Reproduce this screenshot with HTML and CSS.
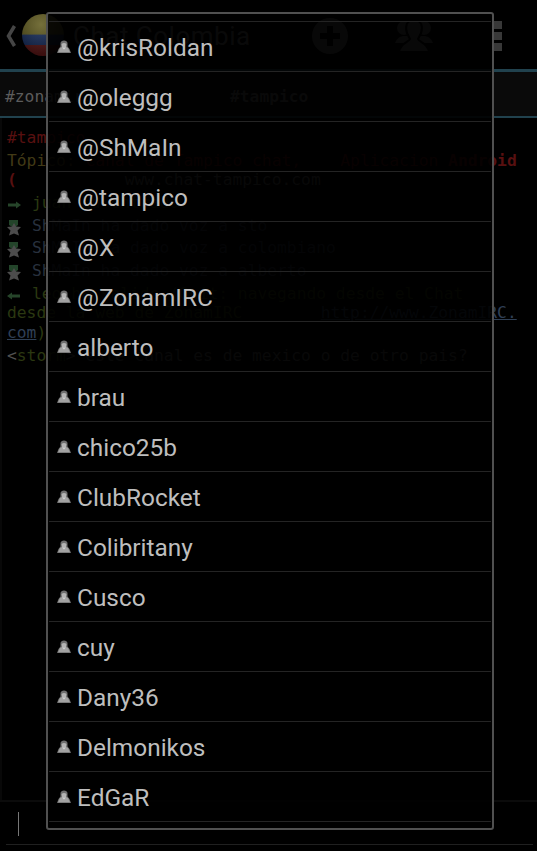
FILE: index.html
```html
<!DOCTYPE html>
<html lang="es">
<head>
  <meta charset="UTF-8" />
  <meta name="viewport" content="width=device-width, initial-scale=1.0"/>
  <title>Chat Colombia</title>
  <link rel="stylesheet" href="styles.css">
</head>
<body>

  <!-- Shared icons -->
  <svg class="defs" width="0" height="0">
    <symbol id="user" viewBox="0 0 14 14">
      <path d="M3.500 3Q4 .5 7 .5T10.500 3L10.500 6.500 12.500 9 14 13H0L1.500 9 3.500 6.500Z" fill="#6e6e6e"/>
      <path d="M4.500 4Q7 2 9.500 4L9 7H5Z" fill="#b4b4b4"/>
      <path d="M3 8 5 7H9L11 8 13 12.300H1Z" fill="#a2a2a2"/>
      <path d="M5 7.500 7 9.500 9 7.500Z" fill="#d4d4d4"/>
    </symbol>
    <symbol id="voice" viewBox="0 0 14 17">
      <path d="M2 0H11V5L7 8 2 5Z" fill="#23442a"/>
      <path d="M7 3 9 6.500 14 7 10.500 10.500 12 15.500 7 13.500 2 15.500 3.500 10.500 0 7 5 6.500Z" fill="#4c4c4c"/>
    </symbol>
  </svg>

  <!-- Chat screen -->
  <div class="chat">
    <header class="topbar">
      <svg class="back" width="12" height="24" viewBox="0 0 12 24"><path d="M9.500 2 3.500 12 9.500 22" fill="none" stroke="#454545" stroke-width="3.500"/></svg>
      <div class="flag"></div>
      <h1>Chat Colombia</h1>
      <svg class="add" width="38" height="38" viewBox="0 0 38 38"><circle cx="19" cy="19" r="18" fill="#555"/><path d="M19 9V29M9 19H29" stroke="#000" stroke-width="6"/></svg>
      <svg class="people" width="38" height="34" viewBox="0 0 38 34" fill="#505050"><circle cx="9" cy="9" r="7"/><circle cx="29" cy="9" r="7"/><path d="M0 24Q2 18 8 17H30Q36 18 38 24Z"/><path d="M19 1C27 1 28 8 26 14L23 20C24 23 33 24 34 33H4C5 24 14 23 15 20L12 14C10 8 11 1 19 1Z" stroke="#000" stroke-width="2"/></svg>
      <div class="more"><i></i><i></i><i></i></div>
    </header>

    <nav class="tabs">
      <span class="tab">#zonamirc</span>
      <span class="tab active">#tampico</span>
    </nav>

    <main class="log">
      <p class="red">#tampico</p>
      <p class="gold">Tópico: <span class="red">Canal de Tampico chat,    Aplicacion <b>Android</b><br><b>(</b></span>           <span class="plain">www.chat-tampico.com</span></p>
      <p class="olive"><svg class="mark" width="14" height="14"><path d="M1 6.500H9V4.500L14 8 9 11.500V9.500H1Z" fill="#26452a"/></svg>juan ha entrado</p>
      <p class="blue"><svg class="mark" width="14" height="17"><use href="#voice"/></svg>ShMaIn ha dado voz a sto</p>
      <p class="blue"><svg class="mark" width="14" height="17"><use href="#voice"/></svg>ShMaIn ha dado voz a colombiano</p>
      <p class="blue"><svg class="mark" width="14" height="17"><use href="#voice"/></svg>ShMaIn ha dado voz a alberto</p>
      <p class="olive"><svg class="mark" width="14" height="14"><path d="M13 6.500H5V4.500L0 8 5 11.500V9.500H13Z" fill="#26452a"/></svg>leo ha salido (Quit: navegando desde el Chat<br>desde la web de ZonamIRC        <a>http://www.ZonamIRC.<br>com</a>)</p>
      <p class="plain">&lt;<span class="olive">storm</span>&gt; este canal es de mexico o de otro pais?</p>
    </main>

    <footer class="entry">
      <div class="field"><span class="caret"></span></div>
    </footer>
  </div>

  <!-- User list dialog -->
  <div class="dialog">
    <ul class="users">
      <li><svg><use href="#user"/></svg>@krisRoldan</li>
      <li><svg><use href="#user"/></svg>@oleggg</li>
      <li><svg><use href="#user"/></svg>@ShMaIn</li>
      <li><svg><use href="#user"/></svg>@tampico</li>
      <li><svg><use href="#user"/></svg>@X</li>
      <li><svg><use href="#user"/></svg>@ZonamIRC</li>
      <li><svg><use href="#user"/></svg>alberto</li>
      <li><svg><use href="#user"/></svg>brau</li>
      <li><svg><use href="#user"/></svg>chico25b</li>
      <li><svg><use href="#user"/></svg>ClubRocket</li>
      <li><svg><use href="#user"/></svg>Colibritany</li>
      <li><svg><use href="#user"/></svg>Cusco</li>
      <li><svg><use href="#user"/></svg>cuy</li>
      <li><svg><use href="#user"/></svg>Dany36</li>
      <li><svg><use href="#user"/></svg>Delmonikos</li>
      <li><svg><use href="#user"/></svg>EdGaR</li>
    </ul>
  </div>

</body>
</html>
```
FILE: styles.css
```css
* {
  box-sizing: border-box;
  margin: 0;
  padding: 0;
}

body {
  height: 851px;
  overflow: hidden;
  background: #000;
  font-family: Roboto, sans-serif;
}

.defs {
  position: absolute;
}

.chat {
  height: 851px;
  display: flex;
  flex-direction: column;
}

/* Top bar */
.topbar {
  height: 72px;
  padding: 2px 0 0 5px;
  display: flex;
  align-items: center;
  border-bottom: 3px solid #21424e;
}

.flag {
  width: 42px;
  height: 42px;
  margin: 0 0 2px 5px;
  border-radius: 50%;
  background:
    radial-gradient(circle at 45% 25%, rgba(255, 255, 255, 0.12), rgba(0, 0, 0, 0.35) 75%),
    linear-gradient(#625c20 48%, #172d5c 50%, #172d5c 73%, #5b1717 75%);
}

.topbar h1 {
  width: 238px;
  margin-left: 9px;
  font-size: 26px;
  font-weight: 400;
  letter-spacing: 0.5px;
  color: #606060;
  white-space: nowrap;
}

.people {
  margin-left: 46px;
}

.more {
  margin-left: 59px;
  display: grid;
  gap: 3px;
}

.more i {
  width: 10px;
  height: 8px;
  background: #383838;
}

/* Channel tabs */
.tabs {
  height: 46px;
  display: flex;
  background: #0a0a0a;
  border-bottom: 2px solid #21424e;
  font: 16.3px/50px "DejaVu Sans Mono", monospace;
  color: #5c5c5c;
}

.tab {
  width: 201px;
  padding-left: 5px;
}

.tab.active {
  width: 138px;
  padding-left: 29px;
  font-weight: bold;
}

/* Messages */
.log {
  flex: 1;
  padding: 10px 0 0 5px;
  border-left: 2px solid #080808;
  font: 16.3px/19.6px "DejaVu Sans Mono", monospace;
}

.log p {
  padding-bottom: 3.1px;
  white-space: pre;
}

.mark {
  width: 25px;
  padding-right: 11px;
  vertical-align: -4px;
  height: 17px;
  margin: -2px 0;
}

.red {
  color: #581010;
}

.gold {
  color: #423a16;
}

.olive {
  color: #2b3811;
}

.blue {
  color: #28313e;
}

.plain {
  color: #505050;
}

.log a {
  color: #2f3f55;
  text-decoration: underline;
}

/* Message entry */
.entry {
  height: 51px;
  padding: 10px 4px 7px 6px;
  border-top: 2px solid #0b0b0b;
}

.field {
  height: 33px;
  padding-left: 12px;
  border-bottom: 1px solid #202020;
}

.caret {
  display: block;
  width: 1px;
  height: 24px;
  background: #777;
}

/* Dialog */
.dialog {
  position: absolute;
  left: 46px;
  top: 12px;
  width: 448px;
  height: 818px;
  padding: 7px 1px 0;
  border: 2px solid #505050;
  border-radius: 3px;
  background: rgba(0, 0, 0, 0.9);
}

.users {
  list-style: none;
  border-top: 1px solid #242424;
}

.users li {
  height: 50px;
  padding: 1px 0 0 8px;
  display: flex;
  align-items: center;
  border-bottom: 1px solid #242424;
  font-size: 24.4px;
  color: #bebebe;
}

.users svg {
  width: 14px;
  height: 14px;
  margin: 0 6px 1px 0;
}
```
